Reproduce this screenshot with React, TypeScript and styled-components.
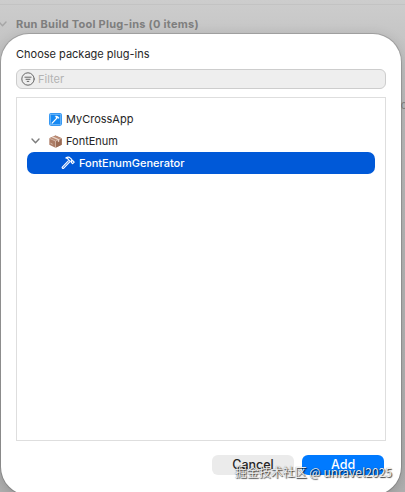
import { ReactNode } from "react";
import styled, { createGlobalStyle } from "styled-components";

const GlobalStyle = createGlobalStyle`
  * {
    box-sizing: border-box;
  }
  body {
    margin: 0;
    overflow: hidden;
    font-family: Inter, "Noto Sans CJK SC", sans-serif;
    font-size: 11px;
    color: #262626;
  }
`;

const Page = styled.div`
  position: relative;
  height: 492px;
  overflow: hidden;
  background: linear-gradient(to bottom, #cdcdcd 0, #c6c6c6 34px, #bdbdbd 110px, #b0b0b0 100%);
`;

const Backdrop = styled.div`
  display: flow-root;
`;

const SectionHeader = styled.div`
  display: flex;
  align-items: center;
  height: 40px;
  margin-top: 4px;
  padding-bottom: 1px;
  border-top: 1px solid #c3c3c3;
  color: #7f7f7f;
  font-weight: 700;
  > svg {
    margin-left: -2px;
    margin-right: 9px;
    color: #a6a6a6;
  }
`;

const SectionTitle = styled.span`
  font-size: 11px;
  letter-spacing: 0.26px;
  white-space: nowrap;
`;

const BackgroundRow = styled.div`
  display: flex;
  justify-content: flex-end;
  margin: 54px -5px 0 0;
  color: #898989;
`;

const Sheet = styled.section`
  position: absolute;
  top: 34px;
  left: 1px;
  width: 400px;
  height: 461px;
  padding: 12px 15px 0;
  display: flex;
  flex-direction: column;
  background: #fff;
  border-radius: 28px;
  box-shadow: 0 0 0 1px rgba(0, 0, 0, 0.15), 0 3px 14px rgba(0, 0, 0, 0.18);
`;

const Heading = styled.h1`
  margin: 0;
  height: 23px;
  font-size: 11px;
  font-weight: 400;
  line-height: 16px;
`;

const FilterField = styled.label`
  display: flex;
  align-items: center;
  gap: 3px;
  height: 20px;
  padding-left: 4px;
  background: #eee;
  border: 1px solid #cdcdcd;
  border-radius: 6px;
`;

const FilterInput = styled.input`
  flex: 1;
  padding: 0;
  border: 0;
  outline: 0;
  background: transparent;
  font: inherit;
  &::placeholder {
    color: #b3b3b3;
    opacity: 1;
  }
`;

const PluginList = styled.ul`
  list-style: none;
  margin: 8px 0 0;
  padding: 10px;
  height: 344px;
  border: 1px solid #dedede;
`;

const Row = styled.li<{ $selected?: boolean; $nested?: boolean }>`
  display: flex;
  align-items: center;
  height: 22px;
  padding-left: ${({ $nested }) => ($nested ? "34px" : "2px")};
  border-radius: 7px;
  background: ${({ $selected }) => ($selected ? "#0059d8" : "transparent")};
  color: ${({ $selected }) => ($selected ? "#fff" : "inherit")};
  font-weight: ${({ $selected }) => ($selected ? 500 : 400)};
`;

const Disclosure = styled.span`
  display: flex;
  justify-content: center;
  width: 13px;
  margin-right: 7px;
  color: #7d7d7d;
`;

const IconSlot = styled.span<{ $nested?: boolean }>`
  display: flex;
  width: 14px;
  margin-right: ${({ $nested }) => ($nested ? "4px" : "3px")};
`;

const Footer = styled.footer`
  display: flex;
  justify-content: flex-end;
  gap: 8px;
  margin-top: 14px;
  padding-right: 2px;
`;

const Button = styled.button<{ $primary?: boolean }>`
  width: 82px;
  height: 20px;
  padding: 0 0 1px;
  border: 0;
  border-radius: 6px;
  background: ${({ $primary }) => ($primary ? "#007aff" : "#ebebeb")};
  color: ${({ $primary }) => ($primary ? "#fff" : "#262626")};
  font: 500 12.5px/19px Inter, sans-serif;
`;

const Watermark = styled.div`
  position: absolute;
  right: 13px;
  bottom: 11px;
  color: rgba(255, 255, 255, 0.9);
  font: 400 12px/18px "Noto Sans CJK SC", sans-serif;
  white-space: nowrap;
  text-shadow: 1px 1px 1px rgba(0, 0, 0, 0.75), 0 0 1px rgba(0, 0, 0, 0.5);
`;

function Chevron() {
  return (
    <svg width="9" height="6" viewBox="0 0 9 6" fill="none" stroke="currentColor" strokeWidth="1.4" strokeLinecap="round" strokeLinejoin="round">
      <path d="M1 1l3.5 3.8L8 1" />
    </svg>
  );
}

function FilterIcon() {
  return (
    <svg width="14" height="14" viewBox="0 0 14 14" fill="none" stroke="#666" strokeLinecap="round">
      <circle cx="7" cy="7" r="6.2" strokeWidth="1" />
      <path d="M3.9 5.2h6.2M5 7.3h4M6.2 9.4h1.6" strokeWidth="1" />
    </svg>
  );
}

function AppIcon() {
  return (
    <svg width="13" height="13" viewBox="0 0 12 12">
      <rect width="12" height="12" rx="2.2" fill="#1588f2" />
      <rect x="1.1" y="1.1" width="9.8" height="9.8" rx="1.2" fill="none" stroke="#c4e3fd" strokeWidth=".6" />
      <path d="M2.9 9.3l4.6-4.8" stroke="#fff" strokeWidth="1.2" strokeLinecap="round" />
      <path d="M5 2.8q2.1-.8 3.5.4l1.2 1.3-.9.9-1-1-.9.4-1-1 .2-.6z" fill="#fff" />
    </svg>
  );
}

function PackageIcon() {
  return (
    <svg width="13" height="13" viewBox="0 0 12 12">
      <path d="M.3 3L6 .4 11.7 3v6L6 11.8.3 9z" fill="#ac7c65" />
      <path d="M.3 3L6 .4 11.7 3 6 5.6z" fill="#b98a73" />
      <path d="M6 5.6L11.7 3v6L6 11.8z" fill="#9a6a53" />
      <path d="M.3 3L6 5.6 11.7 3M6 5.6v6.2" fill="none" stroke="#ead7cb" strokeWidth=".55" />
      <path d="M2.4 2l5.8 2.6v2l1.3-.6V4L3.7 1.4z" fill="#ead7cb" />
      <path d="M1.4 7.6l2 1" stroke="#dfc6b7" strokeWidth=".8" />
    </svg>
  );
}

function HammerIcon() {
  return (
    <svg width="14" height="14" viewBox="0 0 14 14" fill="none" stroke="#fff" strokeWidth="1.15" strokeLinecap="round" strokeLinejoin="round">
      <path d="M7.3 4.9l-6 6.2c-.6.7.5 1.8 1.2 1.2l6-6.2" />
      <path d="M4.8 1.9c1.7-1 3.6-.8 4.8.4l1.2 1.2-.1 1 .5.5.6-.3 1.4 1.4-1.6 1.6-1.4-1.4.3-.6-.5-.5-.9.1-2-2C7.3 2.8 6.2 2.2 4.8 1.9z" />
    </svg>
  );
}

interface PluginItem {
  name: string;
  icon: ReactNode;
  expanded?: boolean;
  nested?: boolean;
  selected?: boolean;
}

const items: PluginItem[] = [
  { name: "MyCrossApp", icon: <AppIcon /> },
  { name: "FontEnum", icon: <PackageIcon />, expanded: true },
  { name: "FontEnumGenerator", icon: <HammerIcon />, nested: true, selected: true },
];

function PluginRow({ name, icon, expanded, nested, selected }: PluginItem) {
  return (
    <Row $nested={nested} $selected={selected}>
      {!nested && <Disclosure>{expanded && <Chevron />}</Disclosure>}
      <IconSlot $nested={nested}>{icon}</IconSlot>
      <span>{name}</span>
    </Row>
  );
}

export default function App() {
  return (
    <>
      <GlobalStyle />
      <Page>
        <Backdrop>
          <SectionHeader>
            <Chevron />
            <SectionTitle>Run Build Tool Plug-ins (0 items)</SectionTitle>
          </SectionHeader>
          <BackgroundRow>ol</BackgroundRow>
        </Backdrop>
        <Sheet>
          <Heading>Choose package plug-ins</Heading>
          <FilterField>
            <FilterIcon />
            <FilterInput placeholder="Filter" />
          </FilterField>
          <PluginList>
            {items.map((item) => (
              <PluginRow key={item.name} {...item} />
            ))}
          </PluginList>
          <Footer>
            <Button>Cancel</Button>
            <Button $primary>Add</Button>
          </Footer>
        </Sheet>
        <Watermark>掘金技术社区 @ unravel2025</Watermark>
      </Page>
    </>
  );
}
